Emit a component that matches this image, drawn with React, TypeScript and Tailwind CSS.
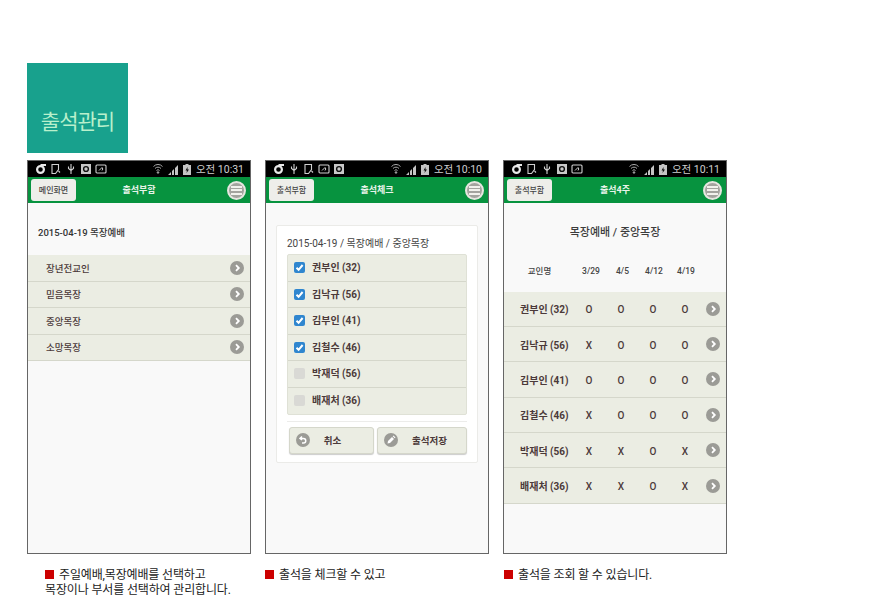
const font = "font-['Roboto','Noto_Sans_CJK_KR','Noto_Sans',sans-serif]";

const StatusLeft = ({ order }: { order: string[] }) => (
	<div className="flex items-center gap-[3px]">
		{order.map((name, i) => (
			<svg key={i} width="12" height="12" viewBox="0 0 12 12" fill="none" stroke="#d0d0d0" strokeWidth="1.1">
				{name === "g" && (
					<>
						<circle cx="5.5" cy="6.5" r="3.4" strokeWidth="2.2" stroke="#e8e8e8" />
						<path d="M5.5 2h5.5" strokeWidth="2" stroke="#e8e8e8" />
					</>
				)}
				{name === "doc" && <path d="M2 1.5h6.5v5l-3 4H2zM8.5 8l1.5 1.5" />}
				{name === "usb" && <path d="M6 1v10M3.5 3.5v2l2.5 2 2.5-2v-2" />}
				{name === "pic" && (
					<>
						<rect x="1" y="1" width="10" height="10" fill="#c8c8c8" stroke="none" />
						<circle cx="6" cy="6" r="2.4" stroke="#111" strokeWidth="1.4" />
					</>
				)}
				{name === "box" && (
					<>
						<rect x="1" y="2" width="10" height="8" rx="1" />
						<path d="M4 7.5l3-3M7 7.5a2 2 0 0 0 0-3" strokeWidth="1" />
					</>
				)}
			</svg>
		))}
	</div>
);

const StatusBar = ({ time, order }: { time: string; order: string[] }) => (
	<div className="flex h-4 items-center justify-between bg-black pl-[7px] pr-[6px]">
		<StatusLeft order={order} />
		<div className="flex items-center text-[10.5px] leading-none tracking-[0px] text-[#cfcfcf]">
			<svg width="10" height="12" viewBox="0 0 10 12" fill="none" stroke="#a8a8a8" strokeWidth="1">
				<path d="M0.5 3.5a6 6 0 0 1 9 0M2 5.5a4 4 0 0 1 6 0M3.5 7.5a2 2 0 0 1 3 0" />
				<circle cx="5" cy="9.5" r="0.8" fill="#a8a8a8" />
			</svg>
			<svg className="ml-[5px]" width="11" height="11" viewBox="0 0 11 11">
				<path d="M0 11l3-3v3zM4 11V7l2-2v6zM7 11V4l3-3v10z" fill="#c4c4c4" />
			</svg>
			<svg className="ml-[4px]" width="8" height="11" viewBox="0 0 8 11">
				<path d="M2.5 0h3v1H8v10H0V1h2.5z" fill="#c4c4c4" />
				<path d="M4.5 3L2.5 6.5h1.5L3.5 9l2.5-3.5H4.5z" fill="#111" />
			</svg>
			<span className="ml-[5px] pt-[2px]">오전 {time}</span>
		</div>
	</div>
);

const MenuIcon = () => (
	<div className="flex h-[19px] w-[19px] items-center justify-center rounded-full border-2 border-[#e6e6e0] bg-[#a3a39e]">
		<div className="flex w-[11px] flex-col gap-[1.5px]">
			<div className="h-[2px] bg-[#f1f1ec]" />
			<div className="h-[2px] bg-[#f1f1ec]" />
			<div className="h-[2px] bg-[#f1f1ec]" />
		</div>
	</div>
);

const Header = ({ back, title }: { back: string; title: string }) => (
	<div className="relative flex h-[26px] items-center justify-between bg-[#07933f] pl-[3px] pr-[4px]">
		<div className="flex h-[22px] w-[45px] items-center justify-center rounded-[3px] bg-[#eeeeea] pt-[2px] text-[8px] font-medium text-[#444]">
			{back}
		</div>
		<span className="absolute left-0 right-0 pt-[2px] text-center text-[9px] font-bold text-[#e8f3ea]">{title}</span>
		<MenuIcon />
	</div>
);

const Chevron = () => (
	<div className="flex h-[14px] w-[14px] items-center justify-center rounded-full bg-[#9b9b96]">
		<svg width="8" height="8" viewBox="0 0 8 8" fill="none" stroke="#fff" strokeWidth="1.8">
			<path d="M3 1.2L5.8 4 3 6.8" />
		</svg>
	</div>
);

const Phone = ({ children, time, order, back, title }: { children: React.ReactNode; time: string; order: string[]; back: string; title: string }) => (
	<div className="flex h-[394px] w-[224px] flex-col border border-[#666] bg-[#f9f9f9]">
		<StatusBar time={time} order={order} />
		<Header back={back} title={title} />
		{children}
	</div>
);

const groups = ["장년전교인", "믿음목장", "중앙목장", "소망목장"];

const members = [
	{ name: "권부인 (32)", checked: true, marks: ["O", "O", "O", "O"] },
	{ name: "김낙규 (56)", checked: true, marks: ["X", "O", "O", "O"] },
	{ name: "김부인 (41)", checked: true, marks: ["O", "O", "O", "O"] },
	{ name: "김철수 (46)", checked: true, marks: ["X", "O", "O", "O"] },
	{ name: "박재덕 (56)", checked: false, marks: ["X", "X", "O", "X"] },
	{ name: "배재처 (36)", checked: false, marks: ["X", "X", "O", "X"] },
];

const Check = ({ on }: { on: boolean }) =>
	on ? (
		<div className="flex h-[11px] w-[11px] items-center justify-center rounded-[2px] bg-[#2f86cf]">
			<svg width="9" height="9" viewBox="0 0 9 9" fill="none" stroke="#fff" strokeWidth="2">
				<path d="M1.5 4.8L3.6 6.8 7.6 2" />
			</svg>
		</div>
	) : (
		<div className="h-[11px] w-[11px] rounded-[2px] bg-[#d9d9d5]" />
	);

const Caption = ({ className, children }: { className: string; children: React.ReactNode }) => (
	<p className={`text-[12px] leading-[15px] tracking-[-0.15px] text-[#222] ${className}`}>{children}</p>
);

const Square = () => <span className="mr-[5px] inline-block h-[9px] w-[9px] bg-[#cc0000]" />;

export default function App() {
	return (
		<div className={`${font} h-[600px] w-[888px] overflow-hidden bg-white pl-[27px] pt-[63px]`}>
			<div className="flex h-[90px] w-[101px] items-end justify-center bg-[#18a18d] pb-[20px] text-[21px] leading-none tracking-[-1px] text-[#b9f0cc]">
				출석관리
			</div>

			<div className="mt-[7px] flex gap-[14px]">
				<Phone time="10:31" order={["g", "doc", "usb", "pic", "box"]} back="메인화면" title="출석부함">
					<div className="flex h-[50px] items-end pb-[13px] pl-[10px] text-[9.5px] font-medium text-[#333]">2015-04-19 목장예배</div>
					<div className="mt-[2px] flex flex-col">
						{groups.map((g) => (
							<div key={g} className="flex h-[26.5px] items-center justify-between border-b border-[#d5d7cb] bg-[#ebede3] pl-[18px] pr-[6px] text-[9.5px] font-medium text-[#4b3a3a]">
								<span className="pt-[2px]">{g}</span>
								<Chevron />
							</div>
						))}
					</div>
				</Phone>

				<Phone time="10:10" order={["g", "usb", "doc", "box", "pic"]} back="출석부함" title="출석체크">
					<div className="mx-[10px] mt-[22px] rounded-[2px] border border-[#ebebe8] bg-white px-[10px] pb-[8px] pt-[11px]">
						<div className="text-[10px] leading-[14px] text-[#444]">2015-04-19 / 목장예배 / 중앙목장</div>
						<div className="mt-[3px] flex flex-col rounded-[2px] border border-[#dfe1d6] bg-[#ebede3]">
							{members.map((m, i) => (
								<div key={m.name} className={`flex h-[26.5px] items-center gap-[7px] pl-[6px] text-[10px] font-bold text-[#4b3a3a] ${i < 5 ? "border-b border-[#d5d7cb]" : ""}`}>
									<Check on={m.checked} />
									{m.name}
								</div>
							))}
						</div>
						<div className="mt-[6px] flex gap-[3px] border-t border-[#ececea] pl-[2px] pt-[5px]">
							<div className="relative flex h-[27px] w-[85px] items-center justify-center rounded-[3px] border border-[#d5d7cb] bg-[#ebede3] pt-[2px] text-[9.5px] font-bold text-[#4b3a3a] shadow-[0_1px_1px_#ccc]">
								<div className="absolute left-[6px] top-[5px] flex h-[14px] w-[14px] items-center justify-center rounded-full bg-[#9b9b96]">
									<svg width="10" height="10" viewBox="0 0 10 10" fill="none" stroke="#fff" strokeWidth="1.5">
										<path d="M4 1.5L2 3.5 4 5M2 3.5h3.5a2.2 2.2 0 0 1 0 4.5H4" />
									</svg>
								</div>
								<span className="ml-[2px]">취소</span>
							</div>
							<div className="relative flex h-[27px] w-[90px] items-center justify-center rounded-[3px] border border-[#d5d7cb] bg-[#ebede3] pt-[2px] text-[9.5px] font-bold text-[#4b3a3a] shadow-[0_1px_1px_#ccc]">
								<div className="absolute left-[6px] top-[5px] flex h-[14px] w-[14px] items-center justify-center rounded-full bg-[#9b9b96]">
									<svg width="10" height="10" viewBox="0 0 10 10" fill="#fff">
										<path d="M1.5 8.5L2 6l4-4 2 2-4 4zM6.7 1.3l.8-.8 2 2-.8.8z" />
									</svg>
								</div>
								<span className="ml-[15px]">출석저장</span>
							</div>
						</div>
					</div>
				</Phone>

				<Phone time="10:11" order={["g", "doc", "usb", "pic", "box"]} back="출석부함" title="출석4주">
					<div className="mt-[21px] text-center text-[11px] font-medium leading-[17px] text-[#3c3c3c]">목장예배 / 중앙목장</div>
					<div className="mt-[23px] flex h-[27.5px] items-start pt-[1px] text-[8.5px] font-medium text-[#444]">
						<span className="w-[71px] text-center">교인명</span>
						<span className="w-[32px] text-center">3/29</span>
						<span className="w-[31px] text-center">4/5</span>
						<span className="w-[32px] text-center">4/12</span>
						<span className="w-[32px] text-center">4/19</span>
					</div>
					<div className="flex flex-col">
						{members.map((m) => (
							<div key={m.name} className="flex h-[35.4px] items-center border-b border-[#d5d7cb] bg-[#ebede3] text-[10px] font-bold text-[#4b3a3a]">
								<span className="w-[69px] whitespace-nowrap pl-[16px] pt-[2px]">{m.name}</span>
								{m.marks.map((x, j) => (
									<span key={j} className="w-[32px] pt-[2px] text-center text-[10px] font-medium">{x}</span>
								))}
								<div className="ml-[5px]">
									<Chevron />
								</div>
							</div>
						))}
					</div>
				</Phone>
			</div>

			<div className="mt-[14px] flex">
				<Caption className="ml-[18px] w-[220px]">
					<Square />주일예배,목장예배를 선택하고
					<br />
					목장이나 부서를 선택하여 관리합니다.
				</Caption>
				<Caption className="w-[239px]">
					<Square />출석을 체크할 수 있고
				</Caption>
				<Caption>
					<Square />출석을 조회 할 수 있습니다.
				</Caption>
			</div>
		</div>
	);
}
